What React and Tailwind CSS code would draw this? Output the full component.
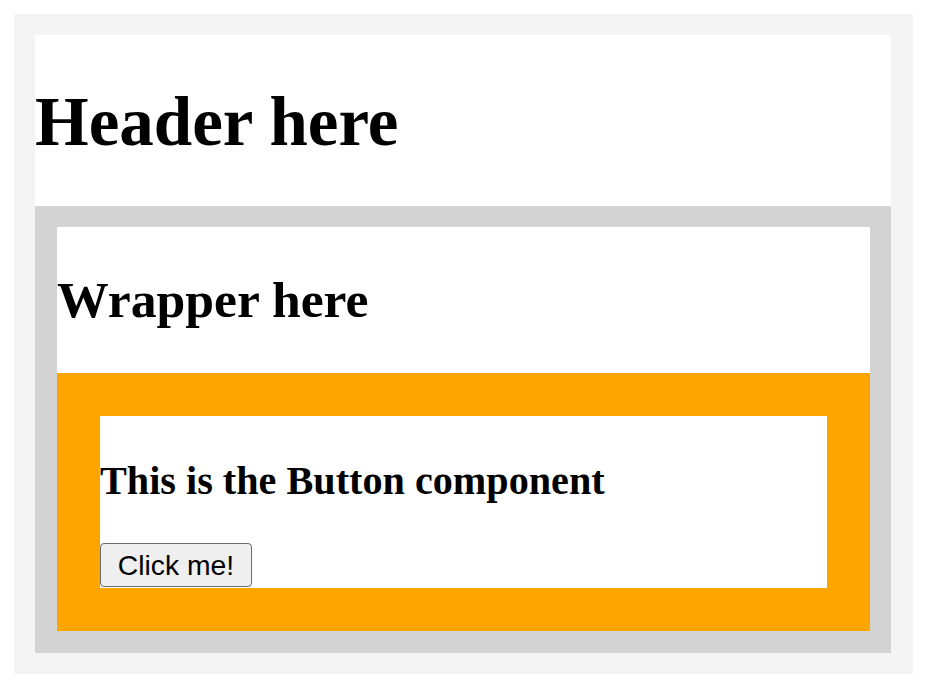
export default function App() {
  return (
    <div className="bg-white min-h-[684px] pt-[14px] pl-[14px]">
      <div className="w-[899px] bg-[#f4f4f4] pt-[21px] pb-[21px] pl-[21px] pr-[22px]">
        <div className="bg-white h-[171px] pt-[48px]">
          <h1 className="text-[69px] leading-[79px] font-bold text-black m-0" style={{ fontFamily: '"Liberation Serif", "Times New Roman", serif' }}>
            Header here
          </h1>
        </div>
        <div className="bg-[#d3d3d3] pt-[21px] pb-[22px] pl-[22px] pr-[21px]">
          <div className="bg-white h-[146px] pt-[43px]">
            <h2 className="text-[51.7px] leading-[60px] font-bold text-black m-0" style={{ fontFamily: '"Liberation Serif", "Times New Roman", serif' }}>
              Wrapper here
            </h2>
          </div>
          <div className="bg-[#ffa500] px-[43px] py-[43px]">
            <div className="bg-white h-[172px] pt-[42px]">
              <h3 className="text-[40.2px] leading-[46px] font-bold text-black m-0 mb-[39px]" style={{ fontFamily: '"Liberation Serif", "Times New Roman", serif' }}>
                This is the Button component
              </h3>
              <button className="w-[152px] h-[44px] flex items-center justify-center bg-[#efefef] border border-[#6b6b6b] rounded-[4px] text-[28.3px] leading-[32px] text-black" style={{ fontFamily: '"Liberation Sans", Arial, sans-serif' }}>
                Click me!
              </button>
            </div>
          </div>
        </div>
      </div>
    </div>
  );
}
